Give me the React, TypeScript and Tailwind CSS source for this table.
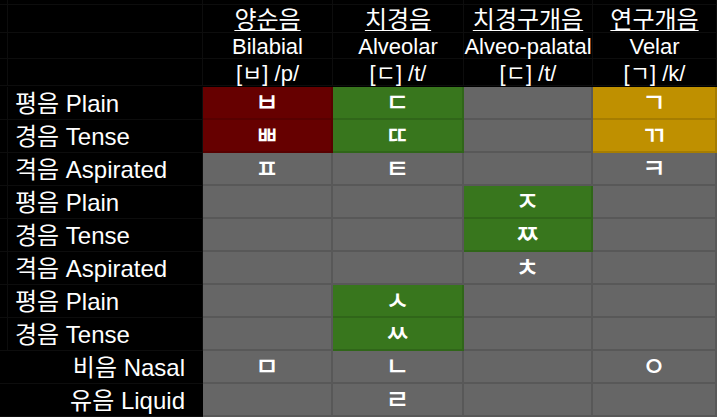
import React from "react";

type Cell = [string, string];

const R = "bg-[#660000]";
const G = "bg-[#38761d]";
const Y = "bg-[#bf9000]";
const N = "bg-[#666666]";

const rows: { label: string; right?: boolean; cells: Cell[] }[] = [
  { label: "평음 Plain", cells: [[R, "ㅂ"], [G, "ㄷ"], [N, ""], [Y, "ㄱ"]] },
  { label: "경음 Tense", cells: [[R, "ㅃ"], [G, "ㄸ"], [N, ""], [Y, "ㄲ"]] },
  { label: "격음 Aspirated", cells: [[N, "ㅍ"], [N, "ㅌ"], [N, ""], [N, "ㅋ"]] },
  { label: "평음 Plain", cells: [[N, ""], [N, ""], [G, "ㅈ"], [N, ""]] },
  { label: "경음 Tense", cells: [[N, ""], [N, ""], [G, "ㅉ"], [N, ""]] },
  { label: "격음 Aspirated", cells: [[N, ""], [N, ""], [N, "ㅊ"], [N, ""]] },
  { label: "평음 Plain", cells: [[N, ""], [G, "ㅅ"], [N, ""], [N, ""]] },
  { label: "경음 Tense", cells: [[N, ""], [G, "ㅆ"], [N, ""], [N, ""]] },
  { label: "비음 Nasal", right: true, cells: [[N, "ㅁ"], [N, "ㄴ"], [N, ""], [N, "ㅇ"]] },
  { label: "유음 Liquid", right: true, cells: [[N, ""], [N, "ㄹ"], [N, ""], [N, ""]] },
];

const heads = [
  { ko: "양순음", en: "Bilabial", ipa: "[ㅂ] /p/" },
  { ko: "치경음", en: "Alveolar", ipa: "[ㄷ] /t/" },
  { ko: "치경구개음", en: "Alveo-palatal", ipa: "[ㄷ] /t/" },
  { ko: "연구개음", en: "Velar", ipa: "[ㄱ] /k/" },
];

const blk = "bg-black border-r border-b border-[#0d0d0d]";

export default function App() {
  return (
    <div className="w-[719px] h-[417px] bg-white overflow-hidden">
      <div
        className="grid w-[717px] h-[417px] bg-black text-white"
        style={{ fontFamily: '"Liberation Sans", "Noto Sans CJK KR", sans-serif' }}
      >
        <div className="grid grid-cols-[8px_195px_130px_131px_129px_124px] grid-rows-[5px_28px_26px_27px]">
          <div className={blk} />
          <div className={blk} />
          <div className={blk} />
          <div className={blk} />
          <div className={blk} />
          <div className={blk} />
          <div className={blk} />
          <div className={blk} />
          {heads.map((h, i) => (
            <div key={"k" + i} className={`${blk} flex items-end justify-center overflow-visible`}>
              <span className="text-[24px] leading-[24px] underline underline-offset-[2px] decoration-1 whitespace-nowrap">
                {h.ko}
              </span>
            </div>
          ))}
          <div className={blk} />
          <div className={blk} />
          {heads.map((h, i) => (
            <div key={"e" + i} className={`${blk} flex items-center justify-center`}>
              <span className="text-[22px] leading-none whitespace-nowrap pt-[2px]">{h.en}</span>
            </div>
          ))}
          <div className={blk} />
          <div className={blk} />
          {heads.map((h, i) => (
            <div key={"p" + i} className={`${blk} flex items-center justify-center`}>
              <span className="text-[22px] leading-none whitespace-nowrap pt-[4px]">{h.ipa}</span>
            </div>
          ))}
        </div>
        <div className="grid grid-cols-[8px_195px_130px_131px_129px_124px] grid-rows-[repeat(10,33px)]">
          {rows.map((r, ri) => (
            <React.Fragment key={ri}>
              {r.right ? (
                <div className="col-span-2 bg-black border-b border-[#0d0d0d] flex items-center justify-end pr-[18px]">
                  <span className="text-[24px] leading-none whitespace-nowrap pt-[2px]">{r.label}</span>
                </div>
              ) : (
                <>
                  <div className={blk} />
                  <div className={`${blk} flex items-center pl-[7px]`}>
                    <span className="text-[24px] leading-none whitespace-nowrap pt-[2px]">{r.label}</span>
                  </div>
                </>
              )}
              {r.cells.map((c, ci) => (
                <div
                  key={ci}
                  className={`${c[0]} border-r-2 border-b-2 border-black/[0.13] flex items-center justify-center`}
                >
                  <span className="text-[26px] leading-none font-medium pt-[2px]">{c[1]}</span>
                </div>
              ))}
            </React.Fragment>
          ))}
        </div>
      </div>
    </div>
  );
}
